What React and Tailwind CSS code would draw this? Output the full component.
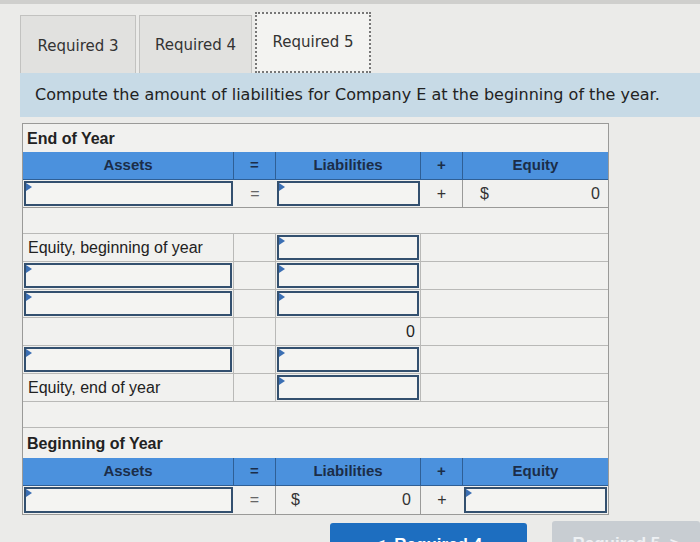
import React from "react";

const cols = "grid grid-cols-[211px_42px_145px_42px_145px]";

const Input = ({ className = "" }) => (
  <div className={"relative h-full border-2 border-[#33506f] bg-[#f4f4f2] " + className}>
    <span className="absolute left-0 top-0 h-0 w-0 border-y-[4px] border-l-[6px] border-y-transparent border-l-[#3b6fb3]"></span>
  </div>
);

const Header = () => (
  <div className={cols + " h-[28px] bg-[#4b91dd] text-[15px] font-bold text-[#1b2d48] border-b border-[#2f5f95]"}>
    <div className="flex items-center justify-center border-r border-[#2f5f95]">Assets</div>
    <div className="flex items-center justify-center border-r border-[#2f5f95]">=</div>
    <div className="flex items-center justify-center border-r border-[#2f5f95]">Liabilities</div>
    <div className="flex items-center justify-center border-r border-[#2f5f95]">+</div>
    <div className="flex items-center justify-center">Equity</div>
  </div>
);

const MidRow = ({ label, left, right, zero }) => (
  <div className={cols + " h-[28px] border-b border-[#b9b9b7]"}>
    <div className="p-[1px] border-r border-[#b9b9b7]">
      {left ? <Input /> : <div className="flex h-full items-center pl-1 text-[16px] text-[#222]">{label}</div>}
    </div>
    <div className="border-r border-[#b9b9b7]"></div>
    <div className="p-[1px] border-r border-[#b9b9b7]">
      {right ? <Input /> : <div className="flex h-full items-center justify-end pr-1 text-[16px] text-[#222]">{zero}</div>}
    </div>
    <div></div>
    <div></div>
  </div>
);

export default function App() {
  return (
    <div className="relative h-[542px] w-[700px] overflow-hidden bg-[#ebebe9]">
      <div className="h-[4px] bg-[#cfcfcd]"></div>
      <div className="flex items-end gap-[3px] pl-[20px] pt-[8px] font-['DejaVu_Sans',Verdana,sans-serif] text-[15px] text-[#333]">
        <div className="flex h-[58px] w-[116px] items-center justify-center border border-b-0 border-[#c2c2c0] bg-[#e1e1df] pt-[4px]">Required 3</div>
        <div className="flex h-[58px] w-[113px] items-center justify-center border border-b-0 border-[#c2c2c0] bg-[#e1e1df] pt-[2px]">Required 4</div>
        <div className="flex h-[61px] w-[116px] items-center justify-center border-2 border-dotted border-[#777] bg-[#f3f3f1]">Required 5</div>
      </div>
      <div className="ml-[20px] flex h-[44px] items-center bg-[#c7dae6] pl-[15px] font-['DejaVu_Sans',Verdana,sans-serif] text-[16px] text-[#222]">
        Compute the amount of liabilities for Company E at the beginning of the year.
      </div>

      <div className="ml-[22px] mt-[6px] w-[587px] border border-[#9a9a98] bg-[#f1f1ef] font-['Liberation_Sans',Arial,sans-serif]">
        <div className="flex h-[28px] items-center pl-1 pt-[2px] text-[16px] font-bold text-[#222]">End of Year</div>
        <Header />
        <div className={cols + " h-[28px] border-b border-[#9a9a98] text-[16px] text-[#333]"}>
          <div className="p-[1px]"><Input /></div>
          <div className="flex items-center justify-center text-[#666]">=</div>
          <div className="p-[1px]"><Input /></div>
          <div className="flex items-center justify-center border-r border-[#9a9a98]">+</div>
          <div className="flex items-center justify-between pl-[17px] pr-[8px]">
            <span>$</span>
            <span>0</span>
          </div>
        </div>
        <div className="h-[26px] border-b border-[#b9b9b7]"></div>
        <MidRow label="Equity, beginning of year" right />
        <MidRow left right />
        <MidRow left right />
        <MidRow zero="0" />
        <MidRow left right />
        <MidRow label="Equity, end of year" right />
        <div className="h-[26px] border-b border-[#b9b9b7]"></div>
        <div className="flex h-[30px] items-center pl-1 pt-[2px] text-[16px] font-bold text-[#222]">Beginning of Year</div>
        <Header />
        <div className={cols + " h-[28px] text-[16px] text-[#333]"}>
          <div className="p-[1px]"><Input /></div>
          <div className="flex items-center justify-center border-r border-[#9a9a98] text-[#666]">=</div>
          <div className="flex items-center justify-between border-r border-[#9a9a98] pl-[15px] pr-[9px]">
            <span>$</span>
            <span>0</span>
          </div>
          <div className="flex items-center justify-center">+</div>
          <div className="p-[1px]"><Input /></div>
        </div>
      </div>

      <div className="mt-[8px] flex items-start pl-[330px] font-['Liberation_Sans',Arial,sans-serif] text-[17px] font-bold text-white">
        <div className="flex h-[40px] w-[200px] justify-center rounded-t-[3px] bg-[#1d6ec0] pt-[9px]">
          <span>&lt;&nbsp;&nbsp;Required 4</span>
        </div>
        <div className="ml-[25px] mt-[-2px] flex h-[42px] w-[150px] justify-center rounded-t-[3px] bg-[#c8cdd2] pt-[10px] text-[#eef1f4]">
          <span>Required 5&nbsp;&nbsp;&gt;</span>
        </div>
      </div>
    </div>
  );
}
